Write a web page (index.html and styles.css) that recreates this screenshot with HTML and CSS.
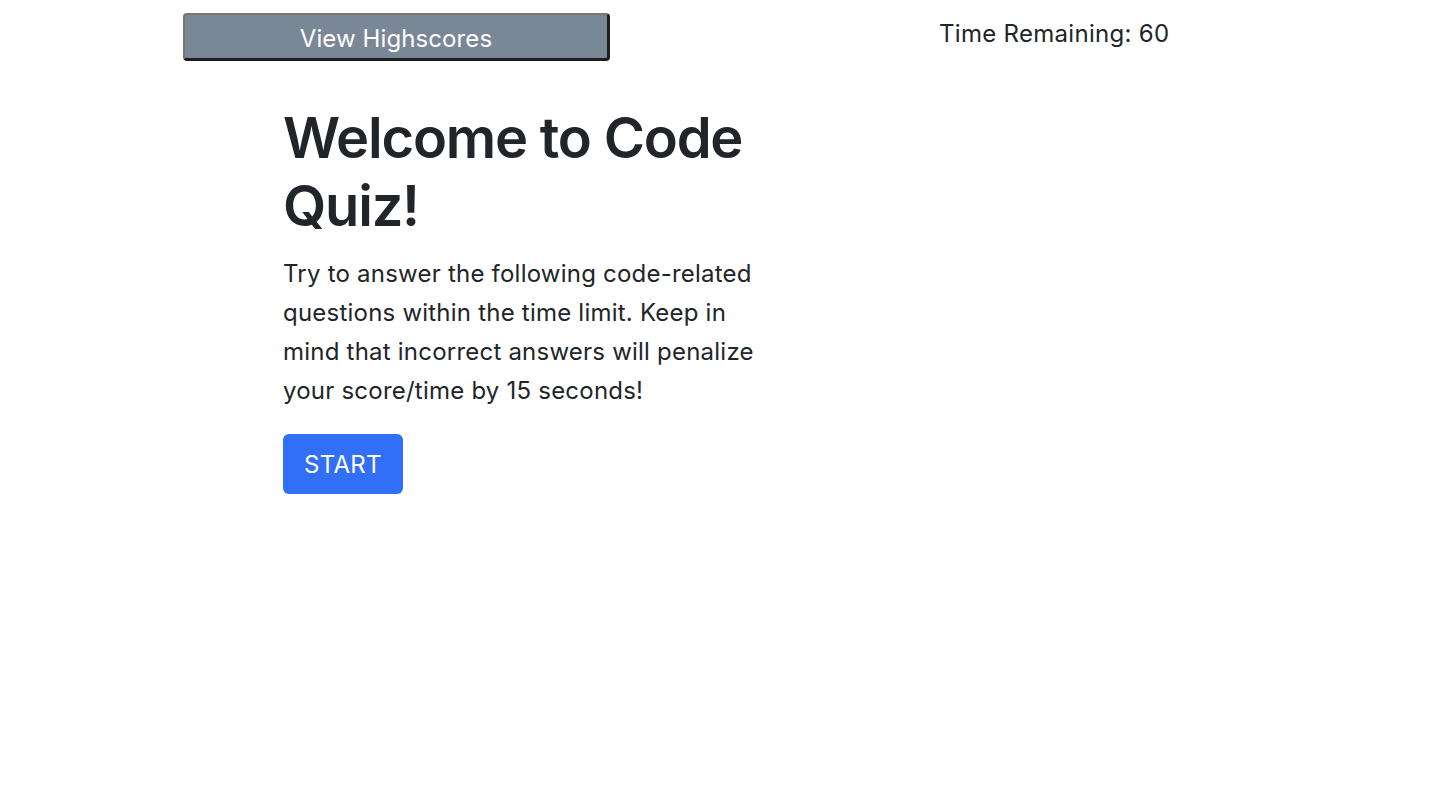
FILE: index.html
```html
<!DOCTYPE html>
<html lang="en">
<head>
<meta charset="utf-8">
<title>Code Quiz</title>
<link rel="stylesheet" href="styles.css">
</head>
<body>
<header class="top-bar">
  <button class="highscores-btn" type="button">View Highscores</button>
  <div class="timer">Time Remaining: <span>60</span></div>
</header>
<main class="intro">
  <h1 class="intro-title">Welcome to Code Quiz!</h1>
  <p class="intro-text">Try to answer the following code-related questions within the time limit. Keep in mind that incorrect answers will penalize your score/time by 15 seconds!</p>
  <button class="start-btn" type="button">START</button>
</main>
</body>
</html>
```
FILE: styles.css
```css
* { box-sizing: border-box; }
body {
  margin: 0;
  font-family: Inter, "Noto Sans", "Liberation Sans", sans-serif;
  color: #212529;
  background: #fff;
}
.top-bar {
  display: flex;
  align-items: flex-start;
  padding: 13px 0 0 183px;
}
.highscores-btn {
  width: 427px;
  height: 48px;
  background: #7a8797;
  color: #fff;
  font-family: inherit;
  font-size: 24px;
  letter-spacing: 0.1px;
  border-style: solid;
  border-width: 2px 3px 3px 2px;
  border-color: #767676 #1e1e1e #1e1e1e #767676;
  border-radius: 4px;
  padding: 3px 0 0;
}
.timer {
  margin-left: 329px;
  font-size: 24px;
  line-height: 42px;
  letter-spacing: 0.3px;
}
.intro {
  width: 490px;
  margin: 43px 0 0 283px;
}
.intro-title {
  font-size: 56px;
  font-weight: 600;
  line-height: 68px;
  margin: 0 0 14px;
  letter-spacing: -1.2px;
}
.intro-text {
  font-size: 24px;
  line-height: 39px;
  letter-spacing: 0.22px;
  margin: 0 0 24px;
}
.start-btn {
  background: #316ff6;
  color: #fff;
  border: 0;
  border-radius: 6px;
  font-family: inherit;
  font-size: 24px;
  letter-spacing: 0.3px;
  width: 120px;
  height: 60px;
  padding: 0;
}
```
